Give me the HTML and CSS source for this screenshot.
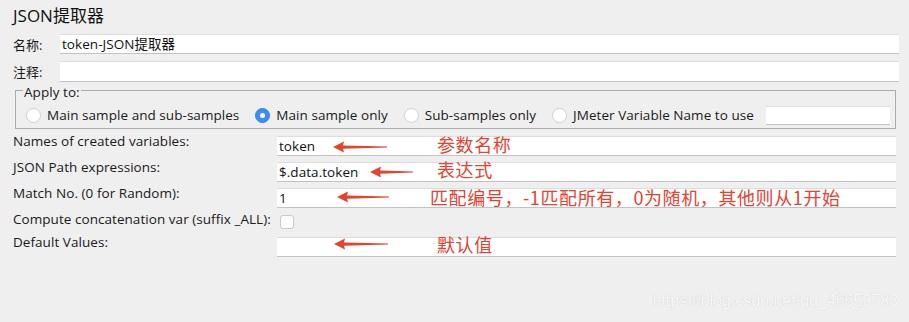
FILE: index.html
```html
<!DOCTYPE html>
<html lang="zh-CN">
<head>
  <meta charset="UTF-8" />
  <title>JSON提取器</title>
  <link rel="stylesheet" href="styles.css">
</head>
<body>
  <div class="panel">
    <h1 class="title">JSON提取器</h1>

    <div class="row name-row">
      <label class="short-label">名称:</label>
      <div class="field">token-JSON提取器</div>
    </div>
    <div class="row comment-row">
      <label class="short-label">注释:</label>
      <div class="field tall"></div>
    </div>

    <fieldset class="apply">
      <legend>Apply to:</legend>
      <div class="radios">
        <span class="radio"></span><span class="radio-text">Main sample and sub-samples</span>
        <span class="radio checked"></span><span class="radio-text">Main sample only</span>
        <span class="radio"></span><span class="radio-text">Sub-samples only</span>
        <span class="radio"></span><span class="radio-text">JMeter Variable Name to use</span>
        <div class="field var-field"></div>
      </div>
    </fieldset>

    <div class="params">
      <div class="param">
        <label>Names of created variables:</label>
        <div class="field">token</div>
      </div>
      <div class="param">
        <label>JSON Path expressions:</label>
        <div class="field">$.data.token</div>
      </div>
      <div class="param">
        <label>Match No. (0 for Random):</label>
        <div class="field">1</div>
      </div>
      <div class="param check-row">
        <label>Compute concatenation var (suffix _ALL):</label>
        <span class="checkbox"></span>
      </div>
      <div class="param last">
        <label>Default Values:</label>
        <div class="field"></div>
      </div>
    </div>

    <!-- red notes drawn over the screenshot -->
    <div class="note" style="left:333px;top:141px"><svg width="54" height="12" viewBox="0 0 54 12"><polygon points="0,6 11,0.5 10,4.5 54,5.6 54,6.6 10,7.8 11,11.5" /></svg></div>
    <div class="note-text" style="left:437px;top:133px">参数名称</div>

    <div class="note" style="left:370px;top:166px"><svg width="43" height="12" viewBox="0 0 43 12"><polygon points="0,6 11,0.5 10,4.5 43,5.6 43,6.6 10,7.8 11,11.5" /></svg></div>
    <div class="note-text" style="left:437px;top:158px">表达式</div>

    <div class="note" style="left:337px;top:191px"><svg width="52" height="12" viewBox="0 0 52 12"><polygon points="0,6 11,0.5 10,4.5 52,5.6 52,6.6 10,7.8 11,11.5" /></svg></div>
    <div class="note-text" style="left:430px;top:186px">匹配编号，-1匹配所有，0为随机，其他则从1开始</div>

    <div class="note" style="left:334px;top:238px"><svg width="54" height="12" viewBox="0 0 54 12"><polygon points="0,6 11,0.5 10,4.5 54,5.6 54,6.6 10,7.8 11,11.5" /></svg></div>
    <div class="note-text" style="left:437px;top:233px">默认值</div>

    <div class="watermark">https://blog.csdn.net/qq_46653783</div>
  </div>
</body>
</html>
```

FILE: styles.css
```css
body {
  margin: 0;
  background: #efefef;
  font-family: 'Open Sans', 'Noto Sans CJK SC', sans-serif;
  font-size: 13.5px;
  letter-spacing: 0.05px;
  color: #1a1a1a;
}

.panel {
  position: relative;
  width: 909px;
  height: 322px;
  padding: 0 10px 0 13px;
  box-sizing: border-box;
}

.title {
  margin: 0;
  padding-top: 5px;
  height: 29px;
  font-size: 17px;
  font-weight: normal;
  line-height: 22px;
  letter-spacing: 0;
  color: #111;
}

.row {
  display: flex;
  align-items: center;
}

.name-row {
  height: 20px;
}

.comment-row {
  margin-top: 7px;
  height: 21px;
}

.short-label {
  width: 47px;
  font-size: 13px;
  letter-spacing: 0;
}

.field {
  flex: 1;
  height: 18px;
  background: #fff;
  border-top: 1px solid #dddddd;
  border-bottom: 1px solid #c3c3c3;
  line-height: 18px;
  padding-left: 2px;
  color: #111;
}

.field.tall {
  height: 19px;
}

.apply {
  margin: -1px 3px 0 2px;
  padding: 6px 5px 3px 10px;
  border: 1px solid #ababab;
  min-width: 0;
}

.apply legend {
  padding: 4px 1px 0;
  margin-left: -3px;
  line-height: 14px;
}

.radios {
  display: flex;
  align-items: center;
  height: 20px;
}

.radio {
  width: 13px;
  height: 13px;
  border-radius: 50%;
  background: #fff;
  border: 1px solid #d0d0d0;
  margin-right: 6px;
  flex-shrink: 0;
}

.radio.checked {
  background: #3b8cf5;
  border-color: #3382ea;
  position: relative;
}

.radio.checked::after {
  content: "";
  position: absolute;
  left: 4px;
  top: 4px;
  width: 5px;
  height: 5px;
  border-radius: 50%;
  background: #fff;
}

.radio-text {
  margin-right: 16px;
  white-space: nowrap;
}

.radio-text:last-of-type {
  margin-right: 12px;
}

.var-field {
  min-width: 0;
  height: 17px;
}

.params {
  margin-top: 4px;
}

.param {
  display: flex;
  align-items: flex-start;
  height: 26px;
}

.param label {
  width: 264px;
  line-height: 16px;
  white-space: nowrap;
}

.param .field {
  margin-top: 3px;
  margin-right: 3px;
}

.check-row {
  height: 23px;
}

.checkbox {
  width: 12px;
  height: 12px;
  margin: 4px 0 0 3px;
  background: #fff;
  border: 1px solid #c9c9c9;
  border-radius: 3px;
}

.note {
  position: absolute;
  line-height: 0;
}

.note polygon {
  fill: #e5432c;
}

.note-text {
  position: absolute;
  font-family: 'Noto Sans CJK SC', sans-serif;
  font-size: 18px;
  letter-spacing: 0.6px;
  line-height: 22px;
  color: #e8412f;
  white-space: nowrap;
}

.watermark {
  position: absolute;
  right: 11px;
  top: 292px;
  font-family: 'Liberation Sans', Arial, sans-serif;
  font-size: 16px;
  letter-spacing: 0;
  color: #f9f9f9;
  text-shadow: 0 0 1px #c4c4c4;
}
```
